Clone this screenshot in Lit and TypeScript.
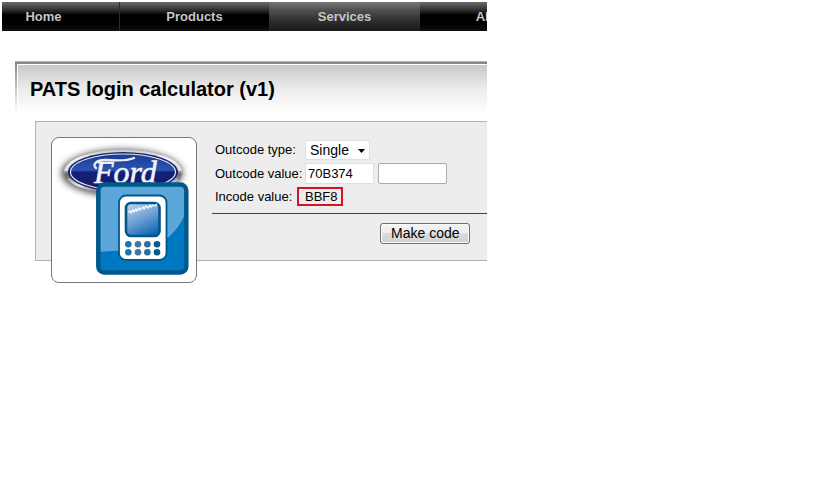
import { LitElement, html, css, svg } from "lit";
import { customElement, state } from "lit/decorators.js";

@customElement("site-nav")
class SiteNav extends LitElement {
  static styles = css`
    :host {
      display: block;
      overflow: hidden;
    }
    .bar {
      display: flex;
      height: 29px;
      background: linear-gradient(#6c6c6c 0, #303030 8px, #000 13px, #000 22px, #111 100%);
    }
    .item {
      flex: none;
      box-sizing: border-box;
      width: 149px;
      text-align: center;
      font: bold 13px/30px "Liberation Sans", Arial, sans-serif;
      color: #c6c6c6;
      text-decoration: none;
    }
    .item.first {
      width: 118px;
      padding-right: 34px;
      border-right: 1px solid #2c2c2c;
    }
    .item.current {
      width: 151px;
      background: linear-gradient(#777 0, #505050 8px, #303030 18px, #1a1a1a 100%);
    }
  `;

  render() {
    return html`<nav class="bar">
      <a class="item first" href="#home">Home</a>
      <a class="item" href="#products">Products</a>
      <a class="item current" href="#services" aria-current="page">Services</a>
      <a class="item" href="#about">About</a>
    </nav>`;
  }
}

@customElement("calculator-badge")
class CalculatorBadge extends LitElement {
  static styles = css`
    :host {
      display: block;
      flex: none;
      box-sizing: border-box;
      width: 146px;
      height: 146px;
      background: #fff;
      border: 1px solid #777;
      border-radius: 8px;
    }
    .art {
      display: block;
      width: 100%;
    }
    .brand {
      font: italic 32px "Liberation Serif", "Times New Roman", serif;
    }
  `;

  render() {
    const keys = [
      [76.3, "#1b75b5"],
      [86, "#44749f"],
      [95.4, "#2d6c9b"],
      [105, "#075a8d"],
    ] as const;
    return html`<svg class="art" viewBox="0 0 144 144" role="img" aria-label="Ford calculator">
      <defs>
        <linearGradient id="chrome" x1="0" y1="0" x2="0" y2="1">
          <stop offset="0" stop-color="#c4c4c4" />
          <stop offset="0.2" stop-color="#f4f4f4" />
          <stop offset="0.5" stop-color="#d9d9d9" />
          <stop offset="0.55" stop-color="#777" />
          <stop offset="0.8" stop-color="#e6e6e6" />
          <stop offset="1" stop-color="#555" />
        </linearGradient>
        <linearGradient id="enamel" x1="0" y1="0" x2="0" y2="1">
          <stop offset="0" stop-color="#1b3a94" />
          <stop offset="0.45" stop-color="#2b55b0" />
          <stop offset="0.5" stop-color="#14207a" />
          <stop offset="1" stop-color="#141a66" />
        </linearGradient>
        <linearGradient id="screen" x1="0.2" y1="0" x2="0.7" y2="1">
          <stop offset="0" stop-color="#b9d1ec" />
          <stop offset="0.5" stop-color="#6c9fd4" />
          <stop offset="1" stop-color="#1166b0" />
        </linearGradient>
        <filter id="soft" x="-20%" y="-40%" width="140%" height="180%">
          <feGaussianBlur stdDeviation="3.2" />
        </filter>
      </defs>
      <ellipse cx="70" cy="35" rx="61" ry="24" fill="#333" opacity="0.75" filter="url(#soft)" />
      <ellipse cx="71" cy="34" rx="59" ry="22.5" fill="url(#chrome)" />
      <path d="M12 33h6l2 5-6 4zM130 33h-6l-2 5 6 4z" fill="#666" opacity="0.6" />
      <ellipse cx="71" cy="34" rx="55" ry="20" fill="#18236f" />
      <ellipse cx="71" cy="34" rx="52.5" ry="18" fill="url(#enamel)" stroke="#e4e8f2" stroke-width="1.2" />
      <path
        d="M44 30C40 27 44 22 53 22S73 24 82 20"
        fill="none" stroke="#e9edf4" stroke-width="2.4" stroke-linecap="round"
      />
      <text class="brand" x="42" y="45" fill="#f1f3f7" stroke="#f1f3f7" stroke-width="0.6">Ford</text>

      <rect x="46.5" y="46.5" width="88" height="88" rx="6" fill="#0078c1" />
      <path d="M47 47h87v27c-7 17-19 31-39 36-14 3-31 2-48 4z" fill="#5ba7d9" />
      <rect x="46.3" y="46.5" width="88" height="88" rx="6" fill="none" stroke="#00588a" stroke-width="4.5" />
      <rect x="67" y="57.5" width="47.5" height="64.5" rx="7" fill="#fff" stroke="#00588a" stroke-width="1.8" />
      <rect x="74" y="65" width="33.5" height="33" rx="5" fill="url(#screen)" stroke="#00588a" stroke-width="2.6" />
      <path
        d="M76 74l2-1 1 2 2-3 1 2 2-3 1 2 2-3 1 2 3-3 1 2 2-3 2 2 2-3 1 2 2-2 2 1 2-2"
        fill="none" stroke="#fff" stroke-width="1.3"
      />
      ${keys.map(
        ([x, tone]) => svg`
          <circle cx=${x} cy="106.3" r="3.3" fill=${tone} />
          <circle cx=${x} cy="114.3" r="3.3" fill=${tone} />`
      )}
    </svg>`;
  }
}

@customElement("app-root")
class AppRoot extends LitElement {
  @state() private incode = "BBF8";

  static styles = css`
    :host {
      display: block;
      min-height: 100vh;
      background: #fff;
      color: #000;
      font: 13px/16px "Liberation Sans", Arial, sans-serif;
    }
    .page {
      width: 59.5%;
      box-sizing: border-box;
      padding: 2px 0 32px 2px;
    }
    .heading {
      margin: 30px 0 8px 13px;
      padding: 2px 0 0 2px;
      background: linear-gradient(#858585, #fff);
      border-top: 1px solid #b5b5b5;
    }
    .title {
      margin: 0;
      padding: 0 0 0 12px;
      border-top: 1px solid #fff;
      border-left: 1px solid #fff;
      background: linear-gradient(#c8c8c8, #e9e9e9 45%, #fff);
      font-size: 20px;
      line-height: 48px;
      white-space: nowrap;
    }
    .panel {
      display: flex;
      align-items: flex-start;
      box-sizing: border-box;
      height: 140px;
      margin-left: 33px;
      padding: 15px 0 0 15px;
      border: 1px solid #b2b2b2;
      border-right: 0;
      background: #ededed;
    }
    .form {
      flex: 1;
      margin-left: 15px;
      padding-top: 3px;
    }
    .row {
      display: flex;
      align-items: center;
      gap: 4px;
      padding-left: 3px;
      margin-bottom: 3px;
    }
    .label {
      flex: none;
      width: 86px;
      white-space: nowrap;
    }
    .picker {
      position: relative;
      display: flex;
    }
    .type,
    .field {
      box-sizing: border-box;
      margin: 0;
      border: 1px solid #e0e0e0;
      background: #fff;
      color: #000;
      font: 14px/16px "Liberation Sans", Arial, sans-serif;
    }
    .type {
      appearance: none;
      width: 65px;
      height: 20px;
      padding: 0 0 0 4px;
    }
    .arrow {
      position: absolute;
      right: 5px;
      top: 9px;
      width: 7px;
      height: 4px;
      background: #000;
      clip-path: polygon(0 0, 100% 0, 50% 100%);
      pointer-events: none;
    }
    .field {
      width: 69px;
      height: 21px;
      padding: 0 2px;
      font-size: 13px;
    }
    .field.extra {
      border-color: #aaa;
      border-radius: 2px;
    }
    .result {
      box-sizing: border-box;
      width: 46px;
      height: 19px;
      margin-left: -8px;
      padding-left: 6px;
      border: 2px solid #d81226;
      line-height: 15px;
    }
    .actions {
      margin-top: 7px;
      padding: 9px 17px 0 0;
      border-top: 1px solid #444;
      text-align: right;
    }
    .make {
      box-sizing: border-box;
      width: 90px;
      height: 21px;
      padding: 0;
      border: 1px solid #707070;
      border-radius: 3px;
      background: linear-gradient(#f4f4f4 0, #ececec 50%, #dcdcdc 50%, #d0d0d0 100%);
      box-shadow: inset 0 0 0 1px #fafafa;
      color: #000;
      font: 14px/17px "Liberation Sans", Arial, sans-serif;
    }
  `;

  private makeCode(event: Event) {
    event.preventDefault();
    this.requestUpdate();
  }

  render() {
    return html`<div class="page">
      <site-nav></site-nav>
      <main>
        <header class="heading"><h1 class="title">PATS login calculator (v1)</h1></header>
        <section class="panel">
          <calculator-badge></calculator-badge>
          <form class="form" @submit=${this.makeCode}>
            <div class="row">
              <label class="label" for="type">Outcode type:</label>
              <span class="picker">
                <select class="type" id="type"><option>Single</option><option>Double</option></select>
                <span class="arrow"></span>
              </span>
            </div>
            <div class="row">
              <label class="label" for="outcode">Outcode value:</label>
              <input class="field" id="outcode" value="70B374" />
              <input class="field extra" aria-label="Second outcode value" />
            </div>
            <div class="row">
              <label class="label" for="incode">Incode value:</label>
              <output class="result" id="incode">${this.incode}</output>
            </div>
            <div class="actions"><button class="make" type="submit">Make code</button></div>
          </form>
        </section>
      </main>
    </div>`;
  }
}
